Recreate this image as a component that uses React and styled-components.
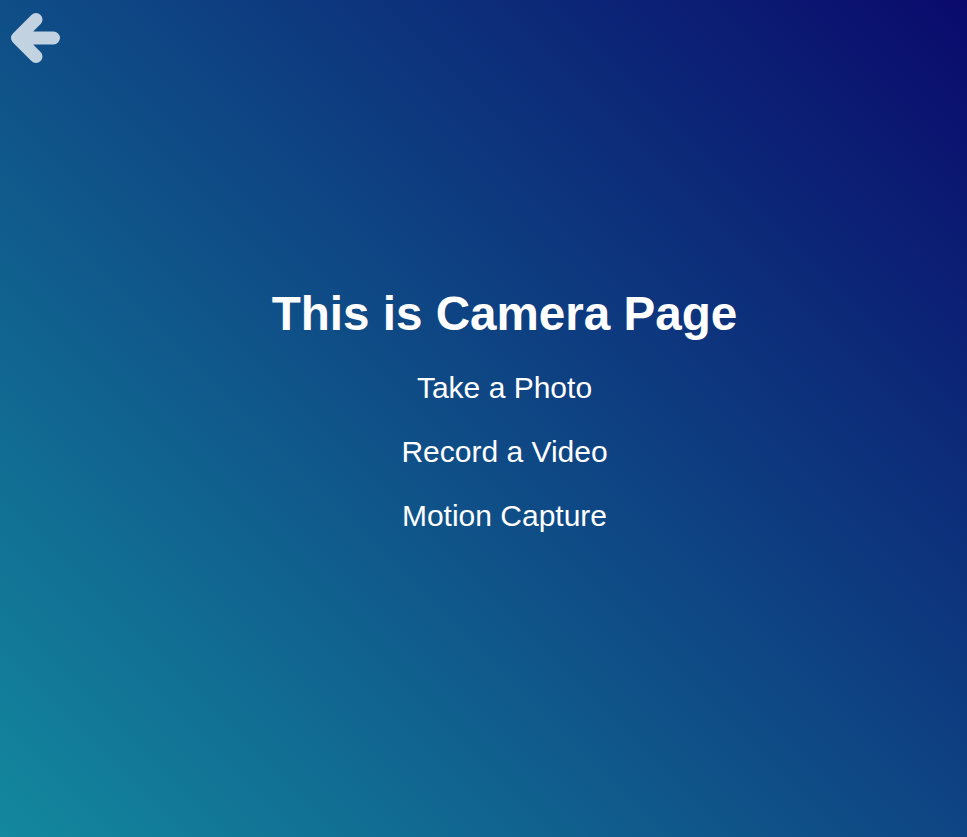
import React from 'react';
import styled, { createGlobalStyle } from 'styled-components';

const GlobalStyle = createGlobalStyle`
  * {
    box-sizing: border-box;
  }
  body {
    margin: 0;
    font-family: 'Liberation Sans', Arial, sans-serif;
  }
`;

const options = ['Take a Photo', 'Record a Video', 'Motion Capture'];

export default function App() {
  return (
    <>
      <GlobalStyle />
      <Page>
        <BackButton aria-label="Back">
          <svg width="70" height="76" viewBox="0 0 70 76">
            <path
              d="M36 19.5 L17.5 38 L36 56.5 M17.5 38 H53.5"
              fill="none"
              stroke="currentColor"
              strokeWidth="13"
              strokeLinecap="round"
              strokeLinejoin="round"
            />
          </svg>
        </BackButton>
        <Content>
          <Title>This is Camera Page</Title>
          <OptionList>
            {options.map((option) => (
              <Option key={option}>{option}</Option>
            ))}
          </OptionList>
        </Content>
      </Page>
    </>
  );
}

const Page = styled.div`
  position: relative;
  min-height: 100vh;
  display: flex;
  padding-left: 42px;
  background: linear-gradient(45deg, #13889e 0%, #0a0a6c 100%);
  color: #fff;
`;

const BackButton = styled.button`
  position: absolute;
  top: 0;
  left: 0;
  padding: 0;
  border: none;
  background: none;
  color: rgba(255, 255, 255, 0.75);
  cursor: pointer;
  line-height: 0;
`;

const Content = styled.main`
  flex: 1;
  display: flex;
  flex-direction: column;
  align-items: center;
  justify-content: center;
  gap: 30px;
  padding-bottom: 19px;
`;

const Title = styled.h1`
  margin: 0;
  font-size: 47.6px;
  line-height: 55px;
  font-weight: bold;
`;

const OptionList = styled.div`
  display: flex;
  flex-direction: column;
  align-items: center;
  gap: 30px;
`;

const Option = styled.div`
  font-size: 30px;
  line-height: 34px;
  cursor: pointer;
`;
